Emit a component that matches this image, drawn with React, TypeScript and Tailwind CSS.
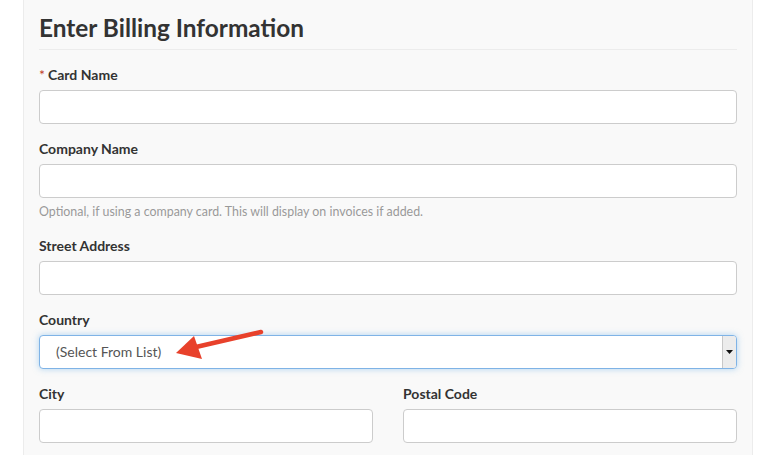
import React from 'react';

const Label: React.FC<{ text: string; required?: boolean }> = ({ text, required }) => (
    <label className="block h-5 mb-[5px] text-[14px] leading-5 font-bold text-[#333]">
        {required && <span className="text-[#c0392b] mr-[3px] font-normal">*</span>}
        {text}
    </label>
);

const TextInput: React.FC = () => (
    <input
        type="text"
        className="block w-full h-[34px] bg-white border border-[#ccc] rounded-[4px] px-3 text-[14px] text-[#555] outline-none"
    />
);

const App: React.FC = () => {
    return (
        <div className="w-[779px] h-[455px] bg-white overflow-hidden" style={{ fontFamily: 'Lato, "Open Sans", sans-serif' }}>
            <div className="relative ml-[23px] w-[730px] h-full bg-[#f9f9f9] border-x border-[#ececec] px-[15px]">
                <div className="pt-[13px] pb-[6px] border-b border-[#ececec]">
                    <h1 className="text-[24.4px] leading-[30px] font-bold text-[#333]">Enter Billing Information</h1>
                </div>

                <div className="pt-[15px]">
                    <div className="mb-[15px]">
                        <Label text="Card Name" required />
                        <TextInput />
                    </div>
                    <div className="mb-[15px]">
                        <Label text="Company Name" />
                        <TextInput />
                        <p className="mt-[5px] text-[12.4px] leading-[18px] text-[#999]">
                            Optional, if using a company card. This will display on invoices if added.
                        </p>
                    </div>
                    <div className="mb-[15px]">
                        <Label text="Street Address" />
                        <TextInput />
                    </div>
                    <div className="mb-[15px]">
                        <Label text="Country" />
                        <div className="flex h-[34px] bg-white border border-[#7fb3e6] rounded-[4px] shadow-[0_0_6px_rgba(102,175,233,0.5)] overflow-hidden">
                            <div className="flex-1 pl-[16px] text-[14px] leading-[32px] text-[#555]">(Select From List)</div>
                            <div className="w-[14px] bg-[#ececec] border-l border-[#c8c8c8] flex items-center justify-center">
                                <svg width="7" height="4" viewBox="0 0 7 4"><path d="M0 0h7L3.5 4z" fill="#111" /></svg>
                            </div>
                        </div>
                    </div>
                    <div className="flex gap-[30px]">
                        <div className="flex-1">
                            <Label text="City" />
                            <TextInput />
                        </div>
                        <div className="flex-1">
                            <Label text="Postal Code" />
                            <TextInput />
                        </div>
                    </div>
                </div>

                {/* annotation arrow */}
                <svg className="absolute left-0 top-0 pointer-events-none" width="300" height="400" viewBox="23 0 300 400">
                    <line x1="260" y1="332" x2="195" y2="347" stroke="#e8412b" strokeWidth="4.5" strokeLinecap="round" />
                    <polygon points="175,353 193,336 201,359" fill="#e8412b" />
                </svg>
            </div>
        </div>
    );
};

export default App;
